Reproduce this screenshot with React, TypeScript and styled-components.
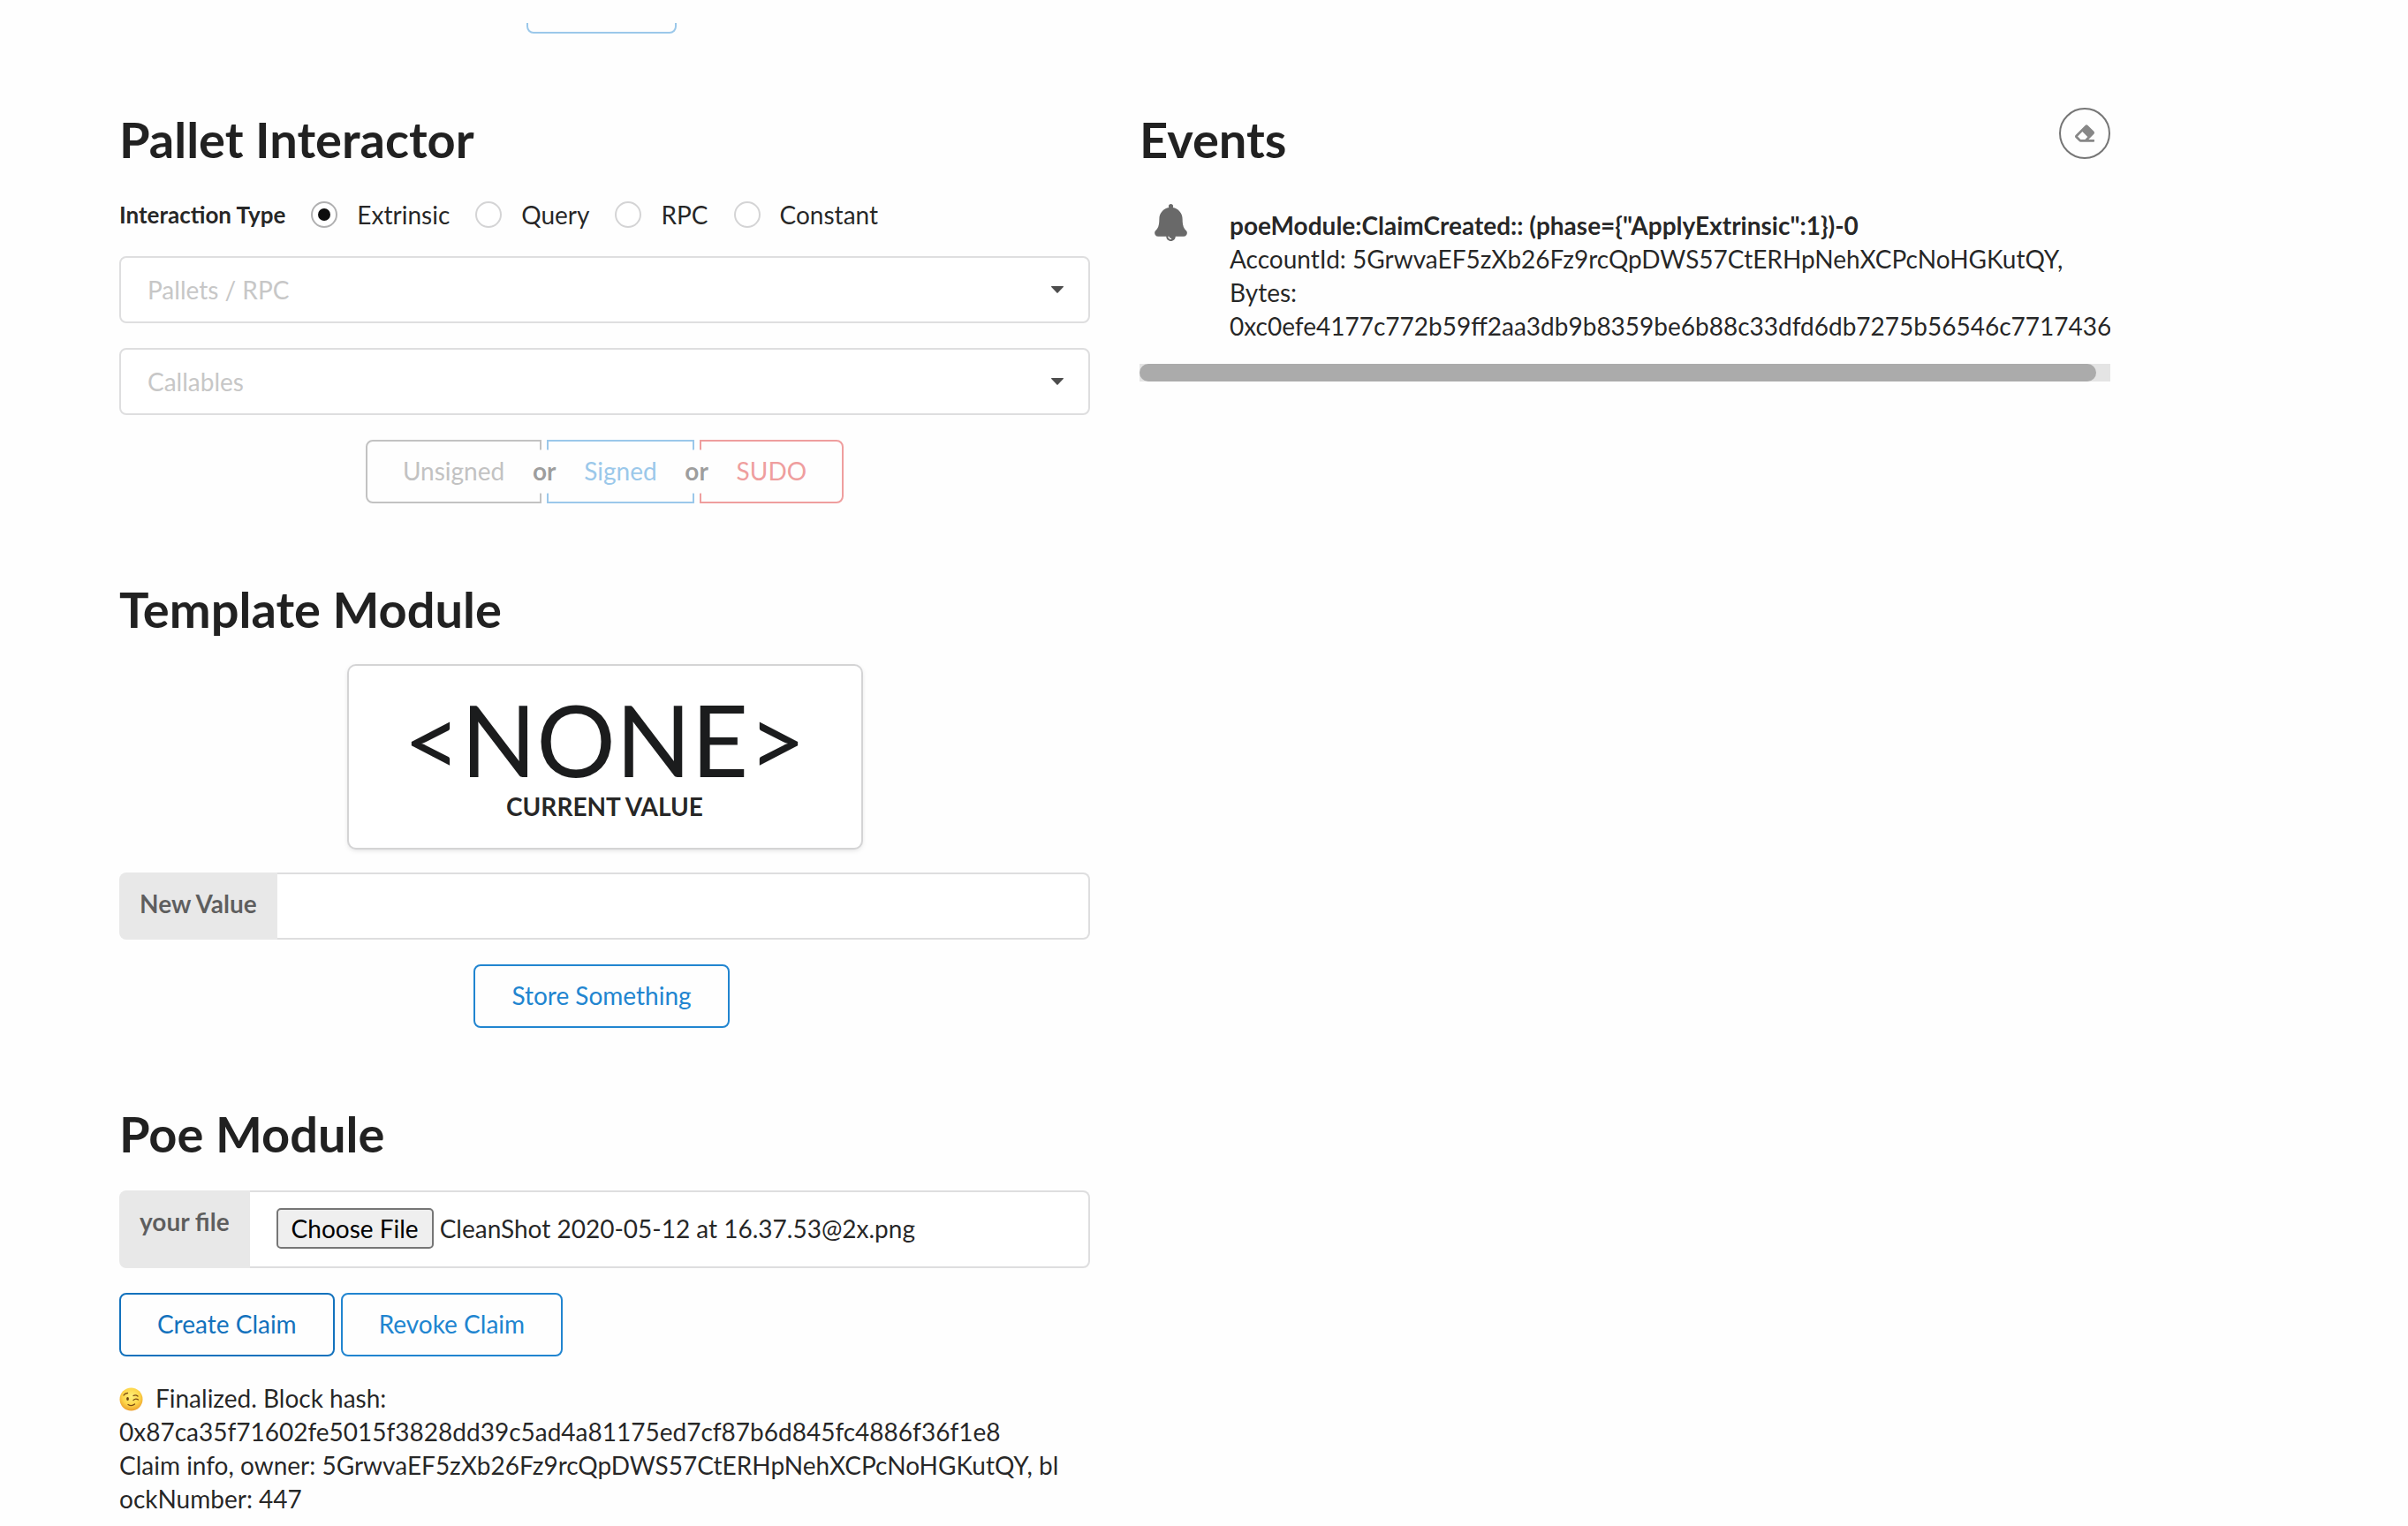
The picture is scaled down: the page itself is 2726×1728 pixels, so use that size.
import React, { useEffect, useRef, useState } from "react";
import styled, { createGlobalStyle } from "styled-components";
import { FaEraser } from "react-icons/fa";

const GlobalStyle = createGlobalStyle`
  *, *::before, *::after { box-sizing: border-box; }
  body {
    margin: 0;
    background: #fefefe;
    color: rgba(0, 0, 0, 0.87);
    font-family: Lato, "Liberation Sans", sans-serif;
    font-size: 28px;
    line-height: 38px;
  }
  button, input, select { font: inherit; }
`;

const Page = styled.main`
  max-width: 2389px;
  padding: 26px 0 0 135px;
`;

const CutRow = styled.div`
  display: flex;
  align-items: flex-end;
  justify-content: center;
  width: calc(50% - 28px);
  height: 12px;
  overflow: hidden;
  margin-bottom: 84px;
`;

const Columns = styled.div`
  display: grid;
  grid-template-columns: minmax(0, 1fr) minmax(0, 1fr);
  column-gap: 56px;
  align-items: start;
`;

const Stack = styled.div`
  display: flex;
  flex-direction: column;
  gap: 84px;
`;

const Section = styled.section`
  display: flex;
  flex-direction: column;
  gap: 28px;
`;

const Title = styled.h1`
  margin: 0;
  font-size: 56px;
  line-height: 72px;
  font-weight: 700;
`;

const RadioRow = styled.div`
  display: flex;
  align-items: center;
  gap: 29px;
  padding-top: 2px;
`;

const GroupLabel = styled.span`
  font-size: 26px;
  font-weight: 700;
`;

const RadioLabel = styled.label`
  display: flex;
  align-items: center;
  gap: 22px;
`;

const Radio = styled.input`
  appearance: none;
  flex: none;
  display: grid;
  place-items: center;
  width: 30px;
  height: 30px;
  margin: 0;
  border: 2px solid #d4d4d5;
  border-radius: 50%;
  background: #fff;
  &:checked { border-color: #b0b0b1; }
  &:checked::before {
    content: "";
    width: 14px;
    height: 14px;
    border-radius: 50%;
    background: rgba(0, 0, 0, 0.95);
  }
`;

const SelectBox = styled.div`
  position: relative;
  height: 76px;
`;

const Select = styled.select`
  appearance: none;
  width: 100%;
  height: 100%;
  padding: 0 60px 0 30px;
  border: 2px solid #dededf;
  border-radius: 8px;
  background: #fff;
  color: #c7c7c7;
`;

const Caret = styled.svg`
  position: absolute;
  right: 30px;
  top: 34px;
  width: 14px;
  height: 8px;
  pointer-events: none;
`;

const Center = styled.div`
  display: flex;
  justify-content: center;
`;

const tones = {
  grey: "#c2c2c2",
  paleBlue: "#9bc8ea",
  paleRed: "#ef9e9e",
  blue: "#2185d0",
  deepBlue: "#1372bd",
};

const corners = {
  start: "8px 0 0 8px",
  middle: "0",
  end: "0 8px 8px 0",
};

const Button = styled.button<{ $tone: keyof typeof tones; $join?: keyof typeof corners }>`
  height: 72px;
  margin: 0 ${(p) => (p.$join ? "0" : "7px")} 0 0;
  padding: 0 ${(p) => (p.$join ? "40px" : "41px")} 2px;
  border: 2px solid ${(p) => tones[p.$tone]};
  border-radius: ${(p) => (p.$join ? corners[p.$join] : "8px")};
  background: transparent;
  color: ${(p) => tones[p.$tone]};
  line-height: 28px;
  white-space: nowrap;
`;

const StubButton = styled(Button)`
  flex: none;
  width: 170px;
`;

const OrGap = styled.span`
  position: relative;
  z-index: 1;
  width: 6px;
  height: 72px;
  display: grid;
  place-items: center;
  justify-content: center;
`;

const OrDisc = styled.span`
  width: 50px;
  height: 50px;
  border-radius: 25px;
  background: #fefefe;
  color: rgba(0, 0, 0, 0.4);
  font-weight: 700;
  line-height: 48px;
  text-align: center;
`;

const Card = styled.div`
  width: 580px;
  padding: 27px 28px;
  border-radius: 8px;
  box-shadow: 0 2px 6px 0 #d4d4d5, 0 0 0 2px #d4d4d5;
  background: #fff;
  text-align: center;
`;

const Value = styled.div`
  color: #1b1c1d;
  font-size: 112px;
  line-height: 112px;
`;

const ValueLabel = styled.div`
  font-weight: 700;
  line-height: 40px;
  text-transform: uppercase;
`;

const Field = styled.div`
  display: flex;
`;

const FieldLabel = styled.label`
  flex: none;
  padding: 21px 23px;
  border-radius: 8px 0 0 8px;
  background: #e8e8e8;
  color: rgba(0, 0, 0, 0.6);
  font-weight: 700;
  line-height: 28px;
`;

const TextInput = styled.input`
  flex: 1;
  min-width: 0;
  height: 76px;
  padding: 0 28px;
  border: 2px solid #dededf;
  border-left: 0;
  border-radius: 0 8px 8px 0;
  background: #fff;
  color: rgba(0, 0, 0, 0.87);
  outline: none;
`;

const FileInput = styled(TextInput)`
  height: 88px;
  padding: 18px 30px;
  &::file-selector-button {
    height: 46px;
    margin: 0 7px 0 0;
    padding: 0 15px;
    border: 2px solid #767676;
    border-radius: 5px;
    background: #efefef;
    color: #000;
    font: inherit;
  }
`;

const ButtonRow = styled.div`
  display: flex;
`;

const Status = styled.div`
  padding-right: 24px;
  white-space: pre-line;
  word-break: break-all;
`;

const Wink = styled.svg`
  width: 27px;
  height: 27px;
  margin-right: 14px;
  vertical-align: -4px;
`;

const EventsHead = styled.div`
  display: flex;
  align-items: flex-start;
  justify-content: space-between;
`;

const ClearButton = styled.button`
  display: grid;
  place-items: center;
  width: 58px;
  height: 58px;
  padding: 0;
  border: 2px solid #767676;
  border-radius: 50%;
  background: transparent;
  color: #878787;
  font-size: 22px;
`;

const Feed = styled.div`
  overflow: hidden;
`;

const FeedEvent = styled.article`
  display: grid;
  grid-template-columns: 70px minmax(0, 1fr);
  column-gap: 32px;
  padding: 9px 0 24px;
`;

const Bell = styled.svg`
  justify-self: center;
  width: 37px;
  height: 42px;
`;

const FeedText = styled.div`
  padding-top: 5px;
`;

const Scrollbar = styled.div`
  height: 20px;
  background: #e4e4e4;
`;

const Thumb = styled.div`
  width: calc(100% - 16px);
  height: 20px;
  border-radius: 10px;
  background: #ababab;
`;

const kinds = ["Extrinsic", "Query", "RPC", "Constant"];

function Dropdown({ label }: { label: string }) {
  return (
    <SelectBox>
      <Select aria-label={label} defaultValue="">
        <option value="">{label}</option>
      </Select>
      <Caret viewBox="0 0 14 8" aria-hidden="true">
        <path d="M0.6 0h12.8c.5 0 .8.6.4 1L7.600 7.600c-.3.4-.9.4-1.200 0L.2 1C-.2.600.1 0 .6 0z" fill="#4d4d4d" />
      </Caret>
    </SelectBox>
  );
}

function Or() {
  return (
    <OrGap>
      <OrDisc>or</OrDisc>
    </OrGap>
  );
}

function WinkFace() {
  return (
    <Wink viewBox="0 0 27 27" role="img" aria-label="winking face">
      <defs>
        <radialGradient id="face" cx="50%" cy="38%" r="62%">
          <stop offset="0" stopColor="#ffef7a" />
          <stop offset="0.6" stopColor="#fdd649" />
          <stop offset="1" stopColor="#eda02c" />
        </radialGradient>
      </defs>
      <circle cx="13.500" cy="13.500" r="13" fill="url(#face)" />
      <ellipse cx="9.500" cy="13" rx="1.400" ry="2" fill="#6b3f10" />
      <path d="M5 9q1.500-2.500 4.500-2.500M16 9.500q2.500-1.500 5 .5M16 14.500q2.500-2.500 5.500-.5M10 19.500q4 2.500 7.500-.5" fill="none" stroke="#7a4a14" strokeWidth="1.300" strokeLinecap="round" />
    </Wink>
  );
}

export default function App() {
  const [kind, setKind] = useState("Extrinsic");
  const [value, setValue] = useState("");
  const fileRef = useRef<HTMLInputElement>(null);

  useEffect(() => {
    const transfer = new DataTransfer();
    transfer.items.add(new File([], "CleanShot 2020-05-12 at 16.37.53@2x.png"));
    if (fileRef.current) fileRef.current.files = transfer.files;
  }, []);

  return (
    <>
      <GlobalStyle />
      <Page>
        <CutRow>
          <StubButton type="button" $tone="paleBlue" aria-label="Submit" />
        </CutRow>
        <Columns>
          <Stack>
            <Section>
              <Title>Pallet Interactor</Title>
              <RadioRow role="radiogroup" aria-labelledby="kind-label">
                <GroupLabel id="kind-label">Interaction Type</GroupLabel>
                {kinds.map((k) => (
                  <RadioLabel key={k}>
                    <Radio type="radio" name="kind" checked={kind === k} onChange={() => setKind(k)} />
                    {k}
                  </RadioLabel>
                ))}
              </RadioRow>
              <Dropdown label="Pallets / RPC" />
              <Dropdown label="Callables" />
              <Center>
                <Button type="button" $tone="grey" $join="start">Unsigned</Button>
                <Or />
                <Button type="button" $tone="paleBlue" $join="middle">Signed</Button>
                <Or />
                <Button type="button" $tone="paleRed" $join="end">SUDO</Button>
              </Center>
            </Section>

            <Section>
              <Title>Template Module</Title>
              <Center>
                <Card>
                  <Value>&lt;NONE&gt;</Value>
                  <ValueLabel>Current Value</ValueLabel>
                </Card>
              </Center>
              <Field>
                <FieldLabel htmlFor="new-value">New Value</FieldLabel>
                <TextInput id="new-value" type="text" value={value} onChange={(e) => setValue(e.target.value)} />
              </Field>
              <Center>
                <Button type="button" $tone="blue">Store Something</Button>
              </Center>
            </Section>

            <Section>
              <Title>Poe Module</Title>
              <Field>
                <FieldLabel htmlFor="file">your file</FieldLabel>
                <FileInput id="file" type="file" ref={fileRef} />
              </Field>
              <ButtonRow>
                <Button type="button" $tone="deepBlue">Create Claim</Button>
                <Button type="button" $tone="blue">Revoke Claim</Button>
              </ButtonRow>
              <Status>
                <WinkFace />
                {"Finalized. Block hash:\n0x87ca35f71602fe5015f3828dd39c5ad4a81175ed7cf87b6d845fc4886f36f1e8\nClaim info, owner: 5GrwvaEF5zXb26Fz9rcQpDWS57CtERHpNehXCPcNoHGKutQY, blockNumber: 447"}
              </Status>
            </Section>
          </Stack>

          <Section>
            <EventsHead>
              <Title>Events</Title>
              <ClearButton type="button" aria-label="Clear events">
                <FaEraser />
              </ClearButton>
            </EventsHead>
            <Feed>
              <FeedEvent>
                <Bell viewBox="0 0 448 512" aria-hidden="true">
                  <path
                    fill="#696969"
                    d="M433.884 366.059C411.634 343.809 384 316.118 384 208c0-79.394-57.831-145.269-133.663-157.83A31.845 31.845 0 0 0 256 32c0-17.673-14.327-32-32-32s-32 14.327-32 32c0 6.750 2.095 13.008 5.663 18.170C121.831 62.731 64 128.606 64 208c0 108.118-27.643 135.809-49.893 158.059C-16.042 396.208 5.325 448 48.048 448H160c0 35.346 28.654 64 64 64s64-28.654 64-64h111.943c42.638 0 64.151-51.731 33.941-81.941zM224 472a8 8 0 0 1 0 16c-22.056 0-40-17.944-40-40h16c0 13.234 10.766 24 24 24z"
                  />
                </Bell>
                <FeedText>
                  <strong>{'poeModule:ClaimCreated:: (phase={"ApplyExtrinsic":1})-0'}</strong>
                  <div>
                    AccountId: 5GrwvaEF5zXb26Fz9rcQpDWS57CtERHpNehXCPcNoHGKutQY, Bytes:
                    0xc0efe4177c772b59ff2aa3db9b8359be6b88c33dfd6db7275b56546c7717436
                  </div>
                </FeedText>
              </FeedEvent>
              <Scrollbar aria-hidden="true">
                <Thumb />
              </Scrollbar>
            </Feed>
          </Section>
        </Columns>
      </Page>
    </>
  );
}
